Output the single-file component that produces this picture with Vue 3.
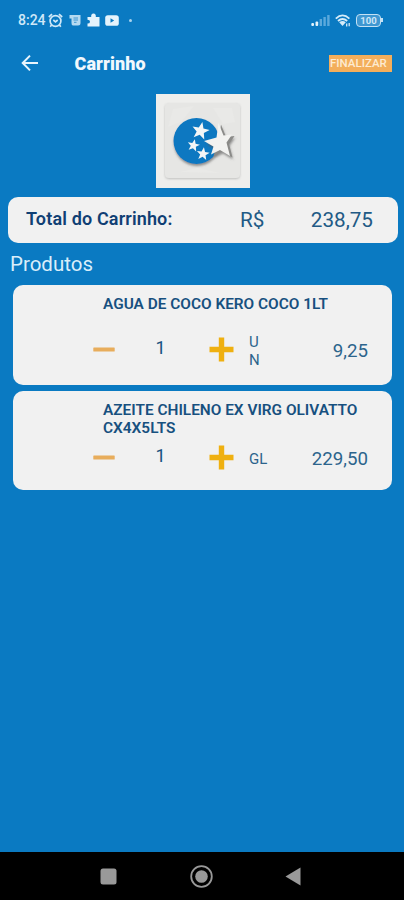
<script setup>
import { ref, computed } from 'vue'

const products = ref([
    { id: 1, name: 'AGUA DE COCO KERO COCO 1LT', qty: 1, unit: 'UN', price: 9.25 },
    { id: 2, name: 'AZEITE CHILENO EX VIRG OLIVATTO CX4X5LTS', qty: 1, unit: 'GL', price: 229.5 }
])

const total = computed(() => products.value.reduce((sum, p) => sum + p.qty * p.price, 0))

function money(value) {
    return value.toFixed(2).replace('.', ',')
}

function add(product) {
    product.qty++
}

function remove(product) {
    if (product.qty > 1) product.qty--
}
</script>

<template>
<div class="screen">
    <div class="status-bar">
        <span class="clock">8:24</span>
        <svg class="alarm" width="15" height="15" viewBox="0 0 15 15" fill="none" stroke="#cfe8f8" stroke-width="1.7">
            <circle cx="7.5" cy="8" r="5.4" />
            <path d="M0.8 4 L4 1.2 M14.2 4 L11 1.2 M5.3 7 L7.5 8.8 L9.7 7 M3.5 12 L2.2 13.7 M11.5 12 L12.8 13.7" />
        </svg>
        <svg class="note" width="12" height="12" viewBox="0 0 12 12">
            <path d="M0.5 1 H11.5 V9 Q11.5 11.5 9 11.5 H4 Q2.5 11.5 2.5 9 V4.5 H0.5 Z" fill="#b5daf1" />
            <path d="M4.5 4 H9 M4.5 6 H9 M5 8.3 H7.5" stroke="#3c94d0" stroke-width="1" />
        </svg>
        <svg class="puzzle" width="13" height="14" viewBox="0 0 13 14">
            <path d="M0.5 4 H4.2 Q3.8 0.5 6.5 0.5 Q9.2 0.5 8.8 4 H12.5 V13.5 H0.5 V10.6 Q3 10.6 3 8.7 Q3 6.8 0.5 6.8 Z" fill="#e4f3fc" />
        </svg>
        <svg class="video" width="14" height="11" viewBox="0 0 14 11">
            <rect x="0.2" y="0.2" width="13.6" height="10.6" rx="2.6" fill="#e4f3fc" />
            <path d="M5.5 3.2 L9.2 5.5 L5.5 7.8 Z" fill="#0a7ac2" />
        </svg>
        <span class="more-dot"></span>
        <div class="status-right">
            <svg width="19" height="13" viewBox="0 0 19 13">
                <g fill="#e4f3fc">
                    <rect x="0.3" y="9" width="2.7" height="3" rx="1" />
                    <rect x="4.5" y="7.5" width="2.7" height="4.5" rx="1" />
                </g>
                <g fill="#5ba9dc">
                    <rect x="8.6" y="5" width="2.4" height="7" />
                    <rect x="12.4" y="3" width="2.4" height="9" />
                    <rect x="16.2" y="1" width="2.4" height="11" />
                </g>
            </svg>
            <svg class="wifi" width="16" height="13" viewBox="0 0 16 13" fill="none" stroke="#d6ecf9" stroke-width="1.8">
                <path d="M0.8 4.6 Q7.5 -1.8 14.4 4.6 M3 7 Q7.5 3 12.2 7" />
                <path d="M4.2 8.2 Q7.5 5.6 10.8 8.2 L7.5 12 Z" fill="#d6ecf9" stroke="none" />
                <path d="M11.7 9.4 V12.6 M14.2 9 V12.2" stroke-width="1.3" />
            </svg>
            <span class="battery">100</span>
            <span class="battery-tip"></span>
        </div>
    </div>

    <div class="app-bar">
        <svg class="back" width="18" height="18" viewBox="0 0 18 18" fill="none" stroke="#e8f4fc" stroke-width="2">
            <path d="M17 9 H2 M9 1.6 L1.7 9 L9 16.4" />
        </svg>
        <h1>Carrinho</h1>
        <button class="finish">FINALIZAR</button>
    </div>

    <svg class="logo" width="94" height="94" viewBox="0 0 94 94">
        <defs>
            <filter id="soft" x="-20%" y="-20%" width="140%" height="140%">
                <feDropShadow dx="0.5" dy="2" stdDeviation="1.1" flood-color="#555" flood-opacity="0.6" />
            </filter>
            <filter id="tile" x="-10%" y="-10%" width="120%" height="120%">
                <feDropShadow dx="0" dy="1" stdDeviation="1" flood-color="#777" flood-opacity="0.4" />
            </filter>
            <path id="star" d="M0 -10 L2.6 -3.2 L9.5 -3.1 L4 1.3 L5.9 8.1 L0 4.2 L-5.9 8.1 L-4 1.3 L-9.5 -3.1 L-2.6 -3.2 Z" />
            <path id="big-star" d="M62.5 29 L67.5 41.5 L76 40.5 L70.5 48.5 L74 62 L64 56 L55 60.5 L57.5 52.5 L48 47 L60.5 43.5 Z" />
        </defs>
        <rect width="94" height="94" fill="#eeeeec" />
        <rect x="9" y="9" width="75" height="75" rx="4" fill="#e6e6e4" filter="url(#tile)" />
        <path d="M12 33 L17 15 L38 12 L26 27 Z M57 14 H76 L79 28 L67 30 Z M24 78 L42 74 L64 79 Z" fill="#e9e9e7" />
        <circle cx="40.5" cy="47" r="23" fill="#0b78c1" filter="url(#soft)" />
        <use href="#big-star" transform="translate(2.5 1.5)" fill="#8a8a88" filter="url(#soft)" />
        <use href="#big-star" fill="#f2f2f0" />
        <g fill="#f4f6f6">
            <use href="#star" transform="translate(44.5 37) rotate(12) scale(0.92)" />
            <use href="#star" transform="translate(37.5 51.5) rotate(12) scale(0.65)" />
            <use href="#star" transform="translate(47 60) rotate(8) scale(0.68)" />
        </g>
    </svg>

    <div class="total">
        <span class="total-label">Total do Carrinho:</span>
        <span class="currency">R$</span>
        <span class="total-value">{{ money(total) }}</span>
    </div>

    <h2>Produtos</h2>

    <div class="products">
        <div v-for="product in products" :key="product.id" class="product">
            <p class="name">{{ product.name }}</p>
            <div class="row">
                <button class="minus" aria-label="Remover" @click="remove(product)">
                    <svg width="22" height="5" viewBox="0 0 22 5">
                        <rect x="0.3" y="0.5" width="21.4" height="4" rx="0.6" fill="#e8ad5c" />
                    </svg>
                </button>
                <span class="qty">{{ product.qty }}</span>
                <button class="plus" aria-label="Adicionar" @click="add(product)">
                    <svg width="25" height="25" viewBox="0 0 25 25">
                        <path d="M9.8 0.5 H15.2 V9.8 H24.5 V15.2 H15.2 V24.5 H9.8 V15.2 H0.5 V9.8 H9.8 Z" fill="#efb010" />
                    </svg>
                </button>
                <span class="unit">{{ product.unit }}</span>
                <span class="price">{{ money(product.qty * product.price) }}</span>
            </div>
        </div>
    </div>

    <div class="nav-bar">
        <svg width="17" height="17" viewBox="0 0 17 17">
            <rect x="0.5" y="0.5" width="16" height="16" rx="2.5" fill="#999" />
        </svg>
        <svg width="23" height="23" viewBox="0 0 23 23">
            <circle cx="11.5" cy="11.5" r="10.3" fill="none" stroke="#999" stroke-width="1.8" />
            <circle cx="11.5" cy="11.5" r="6.3" fill="#999" />
        </svg>
        <svg width="16" height="19" viewBox="0 0 16 19">
            <path d="M15.5 0.5 V18.5 L0.5 9.5 Z" fill="#999" />
        </svg>
    </div>
</div>
</template>

<style>
body {
    margin: 0;
    background-color: #0a7ac2;
}
</style>

<style scoped>
.screen {
    display: flex;
    flex-direction: column;
    height: 900px;
    background-color: #0a7ac2;
    font-family: Roboto, Arial, sans-serif;
    overflow: hidden;
}

button {
    border: none;
    background: none;
    padding: 0;
    font-family: inherit;
    cursor: pointer;
}

.status-bar {
    display: flex;
    align-items: center;
    height: 40px;
    padding: 0 21px 0 18px;
    color: #cfe8f8;
}

.clock {
    width: 30px;
    font-size: 14px;
    font-weight: 500;
}

.note {
    margin-left: 6px;
}

.puzzle {
    margin-left: 6px;
}

.video {
    margin-left: 5px;
}

.more-dot {
    width: 3px;
    height: 3px;
    margin-left: 10px;
    border-radius: 50%;
    background-color: #a9d3ee;
}

.status-right {
    display: flex;
    align-items: center;
    margin-left: auto;
}

.wifi {
    margin-left: 5px;
}

.battery {
    box-sizing: border-box;
    width: 25px;
    height: 13px;
    margin-left: 5px;
    border: 1.5px solid #c3e1f4;
    border-radius: 4px;
    background-color: #3f97d1;
    font-size: 9.5px;
    font-weight: 700;
    line-height: 11px;
    text-align: center;
}

.battery-tip {
    width: 2px;
    height: 4px;
    background-color: #c3e1f4;
}

.app-bar {
    display: flex;
    align-items: center;
    height: 46px;
    padding: 0 12px 0 21px;
}

h1 {
    margin: 0 0 0 35.5px;
    color: #f1f8fd;
    font-size: 18px;
    font-weight: 900;
    letter-spacing: 0.1px;
}

.finish {
    height: 17px;
    width: 63px;
    margin-left: auto;
    padding: 0 0 0 1px;
    background-color: #f3ae5b;
    color: #fdebd2;
    font-size: 11.5px;
    font-weight: 500;
    line-height: 17px;
    text-align: left;
    white-space: nowrap;
}

.logo {
    margin: 8px 0 0 155.5px;
}

.total {
    display: flex;
    align-items: center;
    box-sizing: border-box;
    height: 46px;
    margin: 9px 6px 0 8px;
    padding: 0 25px 0 18px;
    border-radius: 10px;
    background-color: #f1f1f1;
    color: #225a85;
    font-size: 20.7px;
}

.total-label {
    width: 214px;
    margin-bottom: 4px;
    color: #103f74;
    font-size: 18px;
    font-weight: 600;
    letter-spacing: 0.15px;
}

.total-value {
    margin-left: auto;
}

h2 {
    margin: 9px 0 0 10px;
    color: #d9eefa;
    font-size: 20.5px;
    font-weight: 400;
    line-height: 24px;
}

.products {
    display: flex;
    flex-direction: column;
    gap: 6px;
    margin: 9px 12px 0 13px;
}

.product {
    display: flex;
    flex-direction: column;
    box-sizing: border-box;
    height: 99.5px;
    padding: 10px 24px 11px 80px;
    border-radius: 10px;
    background-color: #f1f1f1;
    color: #2c648c;
}

.name {
    flex: none;
    min-height: 33px;
    margin: 0 0 0 10px;
    color: #17507f;
    font-size: 15.4px;
    font-weight: 600;
    line-height: 18px;
}

.row {
    display: grid;
    grid-template-columns: 22px 94px 40px 20px 1fr;
    align-items: center;
    height: 42px;
}

.row button {
    display: flex;
}

.qty {
    margin-right: 9px;
    padding: 0 0 4px 6px;
    color: #17507f;
    font-size: 18px;
    text-align: center;
}

.unit {
    width: 19.5px;
    padding-top: 3px;
    font-size: 15px;
    line-height: 18px;
    word-break: break-all;
}

.price {
    padding-top: 3px;
    font-size: 18.7px;
    text-align: right;
}

.nav-bar {
    display: flex;
    align-items: center;
    justify-content: space-between;
    height: 48px;
    margin-top: auto;
    padding: 0 103px 0 100px;
    background-color: #000;
}
</style>
